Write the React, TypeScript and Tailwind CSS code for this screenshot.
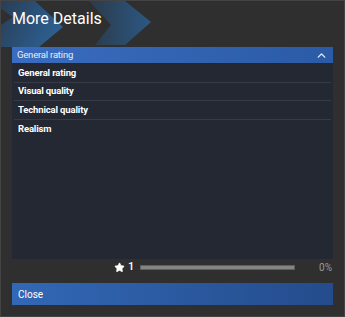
import { ChevronUp, Star } from 'lucide-react'

const items = ['General rating', 'Visual quality', 'Technical quality', 'Realism']

function Chevrons() {
  return (
    <svg className="absolute left-0 top-0" width="170" height="46" viewBox="0 0 170 46">
      <defs>
        <linearGradient id="cv1" x1="0" y1="0" x2="1" y2="0.4">
          <stop offset="0" stopColor="#2a3d52" />
          <stop offset="0.7" stopColor="#2b5580" />
          <stop offset="1" stopColor="#2d5f8d" />
        </linearGradient>
        <linearGradient id="cv2" x1="0" y1="0" x2="1" y2="0">
          <stop offset="0" stopColor="#2c3a48" />
          <stop offset="1" stopColor="#2b5884" />
        </linearGradient>
      </defs>
      <polygon points="0,0 34,0 62,26 38,46 0,46 0,24 12,16 0,8" fill="url(#cv1)" />
      <polygon points="88,0 124,0 150,21 124,44 94,44 110,24" fill="url(#cv2)" />
    </svg>
  )
}

export default function App() {
  return (
    <div
      className="w-[345px] h-[317px] bg-[#2f2f2f] border border-[#444] relative overflow-hidden flex flex-col"
      style={{ fontFamily: 'Roboto, "Liberation Sans", sans-serif' }}
    >
      <Chevrons />
      <div className="relative h-[46px] px-[11px] pt-[6px] text-white text-[16px] leading-[24px]">
        More Details
      </div>
      <div className="relative mx-[11px] h-[212px] bg-[#232833] flex flex-col">
        <div className="h-[16px] flex items-center justify-between px-[5px] bg-gradient-to-r from-[#3a6cbf] to-[#2b5ba6] text-[#e6eefa] text-[9.5px] tracking-[-0.2px]">
          <span>General rating</span>
          <ChevronUp className="w-[13px] h-[13px]" strokeWidth={2.5} />
        </div>
        <div className="px-[2px] pt-[1px]">
          {items.map((item, i) => (
            <div
              key={item}
              className={`h-[18.5px] flex items-center px-[4px] text-white font-bold text-[9.5px] tracking-[-0.15px] ${
                i < items.length - 1 ? 'border-b border-[#363b47]' : ''
              }`}
            >
              {item}
            </div>
          ))}
        </div>
      </div>
      <div className="relative h-[17px] flex items-center pl-[113px] pr-[12px] text-[11px] text-white">
        <Star className="w-[11px] h-[11px] fill-white" strokeWidth={1.5} />
        <span className="ml-[3px] w-[12px] font-medium">1</span>
        <div className="w-[155px] h-[5px] bg-[#858585] border border-[#5e5e5e]" />
        <span className="ml-auto text-[#9a9a9a] text-[10px]">0%</span>
      </div>
      <div className="relative mx-[11px] mt-[7px] h-[22px] bg-gradient-to-r from-[#3268b6] to-[#244c8c] flex items-center px-[6px] text-white text-[10px]">
        Close
      </div>
    </div>
  )
}
